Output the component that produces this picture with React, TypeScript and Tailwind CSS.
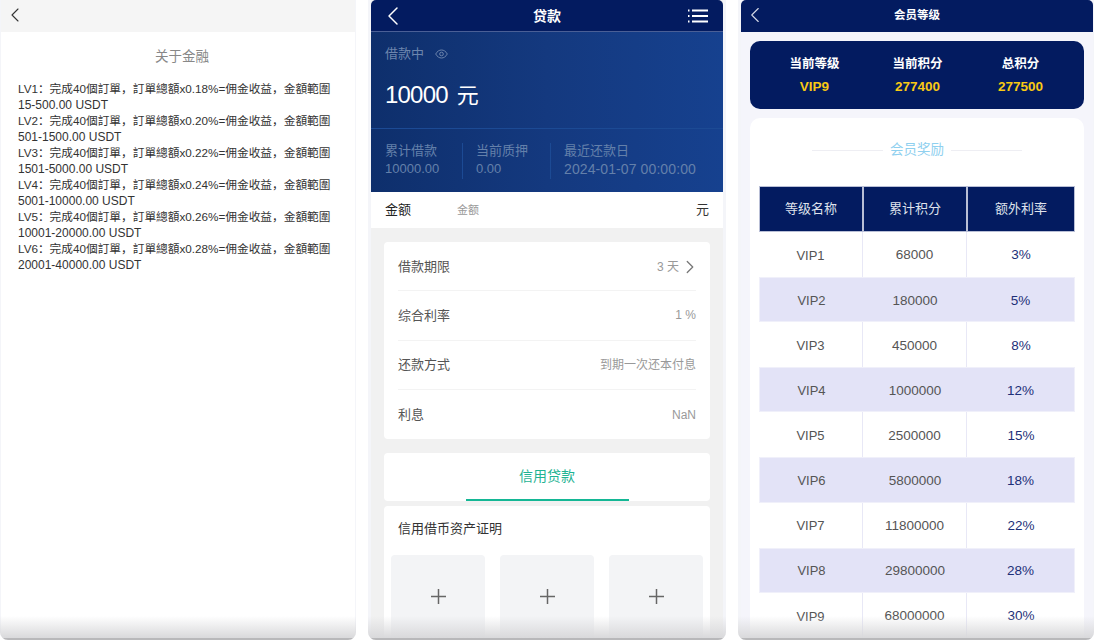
import type { ReactNode } from 'react'
import { ChevronLeft, ChevronRight } from 'lucide-react'

const font = "font-['Liberation_Sans','Noto_Sans_CJK_SC',sans-serif]"

const levels = [
  ['LV1', '0.18', '15-500.00 USDT'],
  ['LV2', '0.20', '501-1500.00 USDT'],
  ['LV3', '0.22', '1501-5000.00 USDT'],
  ['LV4', '0.24', '5001-10000.00 USDT'],
  ['LV5', '0.26', '10001-20000.00 USDT'],
  ['LV6', '0.28', '20001-40000.00 USDT'],
]

const loanRows = [
  { label: '综合利率', value: '1 %' },
  { label: '还款方式', value: '到期一次还本付息' },
]

const vipRows = [
  ['VIP1', '68000', '3%'],
  ['VIP2', '180000', '5%'],
  ['VIP3', '450000', '8%'],
  ['VIP4', '1000000', '12%'],
  ['VIP5', '2500000', '15%'],
  ['VIP6', '5800000', '18%'],
  ['VIP7', '11800000', '22%'],
  ['VIP8', '29800000', '28%'],
  ['VIP9', '68000000', '30%'],
]

function Frame({ className, children }: { className: string; children: ReactNode }) {
  return (
    <div className={`relative h-[640px] shrink-0 overflow-hidden rounded-b-[8px] bg-[#f4f5f9] ${className}`}>
      {children}
      {/* grey fade the phone frame leaves along its lower edge */}
      <div className="pointer-events-none absolute inset-x-0 bottom-0 h-[24px] border-b-[2px] border-[#b8b8ba] bg-gradient-to-b from-transparent to-[#d9d9db]" />
    </div>
  )
}

function AboutPanel() {
  return (
    <section className="flex h-full flex-col bg-white">
      <div className="flex h-[32px] shrink-0 items-center bg-[#f5f5f5] pl-[1.5px] text-[#333]">
        <ChevronLeft size={24} strokeWidth={1.1} className="-mt-[2px]" />
      </div>
      <h2 className="mt-[15px] pl-[8px] text-center text-[13.500px] leading-[20px] text-[#888]">关于金融</h2>
      <div className="mt-[14px] pl-[17px] text-[12px] leading-[16px] text-[#333]">
        {levels.map(([level, rate, range]) => (
          <div key={level}>
            <p className="whitespace-nowrap text-[11.700px]">
              {`${level}\uFF1A完成40個訂單\uFF0C訂單總額x${rate}%=佣金收益\uFF0C金額範圍`}
            </p>
            <p>{range}</p>
          </div>
        ))}
      </div>
    </section>
  )
}

function LoanPanel() {
  return (
    <section className="flex h-full flex-col bg-[#f1f1f1]">
      <header className="grid h-[32px] shrink-0 grid-cols-[1fr_auto_1fr] items-center overflow-hidden rounded-t-[5px] border-b border-[#4a5f96] bg-[#031b60] text-white">
        <ChevronLeft size={32} strokeWidth={1.1} className="ml-[5.5px]" />
        <span className="text-[14px] font-bold">贷款</span>
        <svg className="mr-[15px] justify-self-end" width="20" height="14" viewBox="0 0 20 14" fill="none" stroke="white" strokeWidth="1.800">
          <path d="M4 1.500h16M4 7h16M4 12.500h16" />
          <path d="M0 1.500h1.500M0 7h1.500M0 12.500h1.500" />
        </svg>
      </header>

      <div className="flex h-[160px] shrink-0 flex-col bg-gradient-to-r from-[#0e2f6c] via-[#14397f] to-[#16418f]">
        <div className="h-[97px] border-b border-[#1c4a94] pl-[14px]">
          <div className="mt-[13px] flex items-center text-[13px] leading-[18px] text-[#6d85ad]">
            借款中
            <svg className="ml-[11px]" width="13" height="10" viewBox="0 0 13 10" fill="none" stroke="#6d85ad">
              <path d="M.7 5C2.200 2.300 4.200 1 6.500 1s4.300 1.300 5.800 4c-1.500 2.700-3.500 4-5.800 4S2.200 7.700.7 5z" />
              <circle cx="6.500" cy="5" r="1.800" />
            </svg>
          </div>
          <p className="mt-[16px] text-[24px] leading-[32px] text-white">
            <span className="tracking-[-0.8px]">10000</span>
            <span className="ml-[3px] text-[22px]"> 元</span>
          </p>
        </div>
        <div className="flex pl-[14px] pt-[14px] text-[13px] leading-[18px] text-[#6480aa]">
          <div className="h-[36px] w-[78px] border-r border-[#1c4a94]">
            <p className="-mt-[1px]">累计借款</p>
            <p>10000.00</p>
          </div>
          <div className="h-[36px] w-[88px] border-r border-[#1c4a94] pl-[13px]">
            <p className="-mt-[1px]">当前质押</p>
            <p>0.00</p>
          </div>
          <div className="pl-[13px]">
            <p className="-mt-[1px]">最近还款日</p>
            <p className="text-[14px] tracking-[0.1px]">2024-01-07 00:00:00</p>
          </div>
        </div>
      </div>

      <div className="flex h-[36px] shrink-0 items-center bg-white px-[14px]">
        <span className="w-[72px] text-[13px] text-[#222]">金额</span>
        <span className="text-[11px] text-[#999]">金额</span>
        <span className="ml-auto text-[13px] text-[#333]">元</span>
      </div>

      <div className="mx-[13px] mt-[14px] h-[197px] shrink-0 rounded-[4px] bg-white px-[14px] text-[13px]">
        <div className="flex h-[49px] items-center justify-between border-b border-[#f3f3f3] pt-[1px]">
          <span className="text-[#555]">借款期限</span>
          <span className="flex items-center text-[12px] text-[#999]">
            3 天
            <ChevronRight size={22} strokeWidth={1.4} className="-mr-[5px] text-[#777]" />
          </span>
        </div>
        {loanRows.map(row => (
          <div key={row.label} className="flex h-[49.500px] items-center justify-between border-b border-[#f3f3f3]">
            <span className="text-[#555]">{row.label}</span>
            <span className="text-[12px] text-[#999]">{row.value}</span>
          </div>
        ))}
        <div className="flex h-[49px] items-center justify-between">
          <span className="text-[#555]">利息</span>
          <span className="text-[12px] text-[#999]">NaN</span>
        </div>
      </div>

      <div className="mx-[13px] mt-[14px] flex h-[48px] shrink-0 flex-col items-center rounded-[4px] bg-white">
        <span className="mt-[13px] text-[14px] leading-[20px] text-[#1fb393]">信用贷款</span>
        <span className="mt-auto h-[2px] w-[163px] bg-[#14b795]" />
      </div>

      <div className="mx-[13px] mt-[5px] flex-1 rounded-[4px] bg-white">
        <p className="mt-[14px] pl-[14px] text-[13px] leading-[18px] text-[#333]">信用借币资产证明</p>
        <div className="mt-[17px] flex justify-between px-[7px]">
          {[0, 1, 2].map(i => (
            <div key={i} className="flex h-[90px] w-[94px] justify-center rounded-[4px] bg-[#f3f4f6] pt-[34px]">
              <svg width="15" height="15" viewBox="0 0 15 15" stroke="#666" strokeWidth="1.500">
                <path d="M0 7.500h15M7.500 0v15" />
              </svg>
            </div>
          ))}
        </div>
      </div>
    </section>
  )
}

function VipPanel() {
  return (
    <section className="flex h-full flex-col bg-[#f5f5fb]">
      <header className="relative flex h-[32px] shrink-0 items-center justify-center overflow-hidden rounded-t-[5px] bg-[#031b60] text-white">
        <ChevronLeft size={26} strokeWidth={1} className="absolute left-[0.500px] top-[1.500px] text-[#d5d9e6]" />
        <span className="text-[11.500px] font-bold">会员等级</span>
      </header>

      <div className="mx-[9px] mt-[9px] flex h-[68px] shrink-0 items-center rounded-[10px] bg-[#031b60] pl-[13px] pr-[12px] text-center">
        {[
          ['当前等级', 'VIP9'],
          ['当前积分', '277400'],
          ['总积分', '277500'],
        ].map(([label, value]) => (
          <div key={label} className="flex-1">
            <p className="text-[12.500px] font-bold leading-[18px] text-white">{label}</p>
            <p className="mt-[5px] text-[13.500px] font-bold leading-[18px] text-[#f9c913]">{value}</p>
          </div>
        ))}
      </div>

      <div className="mx-[9px] mt-[9px] flex-1 rounded-t-[10px] bg-white px-[9px]">
        <div className="mt-[23px] flex items-center justify-center">
          <span className="h-px w-[71px] bg-[#eeeef3]" />
          <span className="mx-[7px] text-[13.500px] leading-[18px] text-[#8fd0ef]">会员奖励</span>
          <span className="h-px w-[71px] bg-[#eeeef3]" />
        </div>
        <div className="mt-[27px] grid grid-cols-[104px_104px_108px] text-center text-[13px]">
          {['等级名称', '累计积分', '额外利率'].map(title => (
            <div
              key={title}
              className="flex h-[46px] items-center justify-center border border-[#b9bfd6] bg-[#031b60] text-[#dfe2ec]"
            >
              {title}
            </div>
          ))}
          {vipRows.map(([name, points, rate], i) => {
            const shaded = i % 2 === 1
            return (
              <div key={name} className={`col-span-3 grid h-[45.100px] grid-cols-subgrid items-center text-[13.500px] ${shaded ? 'border border-[#f0f0fa] bg-[#e3e3f7]' : ''}`}>
                <div className={`flex h-full items-center justify-center pt-[2px] text-[13px] text-[#555] ${shaded ? '' : 'border-r border-[#e8e8f6]'}`}>{name}</div>
                <div className={`flex h-full items-center justify-center pt-[2px] text-[#555] ${shaded ? '' : 'border-r border-[#e8e8f6]'}`}>{points}</div>
                <div className="flex h-full items-center justify-center pt-[2px] text-[#1d2f78]">{rate}</div>
              </div>
            )
          })}
        </div>
      </div>
    </section>
  )
}

export default function App() {
  return (
    <div className={`flex h-[641px] w-[1094px] gap-[12px] overflow-hidden bg-white ${font}`}>
      <Frame className="w-[356px] px-[1px]">
        <AboutPanel />
      </Frame>
      <Frame className="w-[358px] px-[3px]">
        <LoanPanel />
      </Frame>
      <Frame className="w-[356px] pl-[3px] pr-[1px]">
        <VipPanel />
      </Frame>
    </div>
  )
}
